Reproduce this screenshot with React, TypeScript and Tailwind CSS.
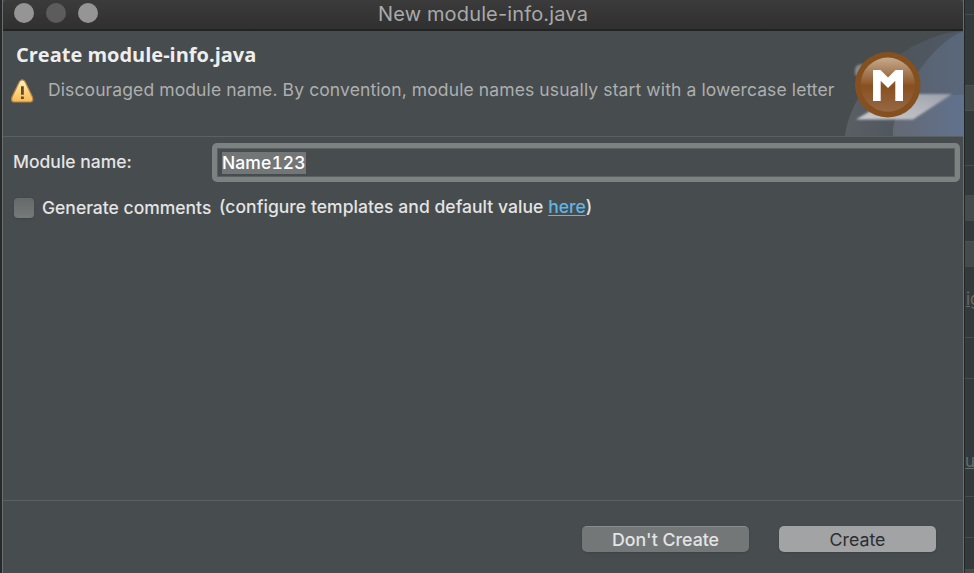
import React from "react";

function WarningIcon() {
  return (
    <svg width="24" height="26" viewBox="0 0 24 26" className="shrink-0">
      <defs>
        <linearGradient id="warn" x1="0" y1="0" x2="0" y2="1">
          <stop offset="0" stopColor="#fff3c4" />
          <stop offset="0.5" stopColor="#fbd581" />
          <stop offset="1" stopColor="#f7b954" />
        </linearGradient>
      </defs>
      <path d="M12.2 1.8C10.6 1.8 9.7 2.9 9.1 4.2L2.1 18.8C1.1 21.6 1.6 24 4 24H20.6C23 24 23.3 21.6 22.3 18.8L15.4 4.2C14.8 2.9 13.8 1.8 12.2 1.8Z" fill="url(#warn)" stroke="#b98046" strokeWidth="1.2" />
      <path d="M11 8.2H13.8V16.8H11ZM11 18.6H13.8V21H11Z" fill="#684821" />
    </svg>
  );
}

function ModuleBanner() {
  return (
    <svg width="130" height="105" viewBox="834 31 130 105" className="shrink-0">
      <defs>
        <linearGradient id="sweep" x1="0" y1="0" x2="1" y2="0">
          <stop offset="0" stopColor="#5a5f65" />
          <stop offset="0.5" stopColor="#4e555c" />
          <stop offset="1" stopColor="#4f5a68" />
        </linearGradient>
        <linearGradient id="sweepMid" x1="0" y1="0" x2="1" y2="0">
          <stop offset="0" stopColor="#59606b" />
          <stop offset="1" stopColor="#5a687c" />
        </linearGradient>
        <linearGradient id="sweepFront" x1="0" y1="0" x2="1" y2="0">
          <stop offset="0" stopColor="#646974" />
          <stop offset="1" stopColor="#61728e" />
        </linearGradient>
        <linearGradient id="sheet" x1="0" y1="1" x2="1" y2="0">
          <stop offset="0" stopColor="#c8cacd" />
          <stop offset="0.6" stopColor="#b2b4ba" />
          <stop offset="1" stopColor="#9a9faa" />
        </linearGradient>
        <linearGradient id="disc" x1="0" y1="0" x2="0" y2="1">
          <stop offset="0" stopColor="#c5aa8e" />
          <stop offset="0.45" stopColor="#935f32" />
          <stop offset="0.52" stopColor="#875020" />
          <stop offset="1" stopColor="#966844" />
        </linearGradient>
        <filter id="soft" x="-20%" y="-20%" width="140%" height="140%">
          <feGaussianBlur stdDeviation="1" />
        </filter>
      </defs>
      <path d="M845 136C849 103 872 73 905 51C924 39 945 32 964 31V136Z" fill="url(#sweep)" />
      <path d="M893 136C895 106 925 46 964 31V136Z" fill="url(#sweepMid)" />
      <path d="M893 136C892 125 896 113 905 108C922 99 943 94 964 95V136Z" fill="url(#sweepFront)" />
      <path d="M855 70Q855 64 863 64L868 67L860 77L855 75Z" fill="#858a8d" filter="url(#soft)" />
      <path d="M856 119.5L875 108L916 94H952L913 119.5Z" fill="url(#sheet)" filter="url(#soft)" />
      <circle cx="887.8" cy="84.7" r="32.8" fill="#85501f" />
      <circle cx="887.8" cy="84.7" r="27.1" fill="url(#disc)" />
      <path d="M873 101V70H880.5L888 77.5L895.5 70H903V101H895.3V80.8L888 88L880.7 80.8V101Z" fill="#fff" />
    </svg>
  );
}

function TitleBar() {
  return (
    <div className="relative h-[31px] shrink-0 rounded-t-[4px] border-b-2 border-[#202322] bg-gradient-to-b from-[#3b3b3b] to-[#303030]">
      <div className="flex gap-3 pl-[11px] pt-[3px]">
        <span className="size-5 rounded-full bg-[#959595]" />
        <span className="size-5 rounded-full bg-[#5c5c5c]" />
        <span className="size-5 rounded-full bg-[#959595]" />
      </div>
      <div className="absolute inset-x-0 top-0 text-center text-[20px] leading-[28px] tracking-[0.15px] text-[#a9a9a9]">New module-info.java</div>
    </div>
  );
}

function RightEdge() {
  return (
    <div className="flex w-[10px] shrink-0 flex-col overflow-hidden border-l border-[#222728] bg-[#343a3b] text-[17px] leading-5 text-[#646b6b]">
      <div className="h-[15px] border-b border-[#464b4c]" />
      <div className="h-[70px]" />
      <div className="h-[26px] border-y border-[#4b4f50] bg-[#434849]" />
      <div className="h-[55px] border-b border-[#474c4d]" />
      <div className="h-[29px]" />
      <div className="h-[26px] bg-[#454a4b]" />
      <div className="h-[20px]" />
      <div className="h-[26px] border-t border-[#4b5051] bg-[#454a4b]" />
      <div className="h-[71px] border-b border-[#474c4d] pt-[22px]"><span className="pl-px underline">ig</span></div>
      <div className="h-[41px] border-b border-[#474c4d]" />
      <div className="h-[118px] border-b border-[#474c4d] pt-[72px]"><span className="underline">u</span></div>
      <div className="h-[41px] border-b border-[#474c4d]" />
      <div className="h-[32px] border-b border-[#474c4d]" />
      <div className="grow bg-[#454a4b]" />
    </div>
  );
}

export default function App() {
  return (
    <div className="flex h-[573px] w-[974px] overflow-hidden bg-[#27292b] font-['Inter',sans-serif] text-[#e3e4e4]">
      <div className="w-[2px] shrink-0" />
      <main className="flex w-[962px] shrink-0 flex-col border-x border-[#697070] bg-[#474c4e]">
        <TitleBar />
        <header className="flex h-[106px] shrink-0 border-b border-[#5b6162]">
          <div className="min-w-0 grow">
            <h1 className="pl-[13px] pt-[10px] font-['Open_Sans',sans-serif] text-[20px] font-bold leading-[28px] whitespace-nowrap text-[#eeeeee]">Create module-info.java</h1>
            <div className="flex pl-[7px] pt-[9px]">
              <WarningIcon />
              <p className="pl-[14px] text-[17.5px] leading-[24px] tracking-[0.11px] whitespace-nowrap text-[#adafaf]">Discouraged module name. By convention, module names usually start with a lowercase letter</p>
            </div>
          </div>
          <div className="-ml-[20px] -mr-px"><ModuleBanner /></div>
        </header>
        <section className="flex h-[364px] shrink-0 flex-col border-b border-[#5b6162] text-[17.5px] font-[450]">
          <div className="flex pl-[10px] pt-[6px]">
            <label className="w-[199px] pt-[7px] leading-6">Module name:</label>
            <div className="flex h-[39px] w-[748px] items-center rounded-[5px] border-[5px] border-[#7c8181] px-[5px] pt-px shadow-[inset_0_0_0_1px_#5b6061]">
              <span className="bg-[#727677] leading-[22px] tracking-[0.1px] text-white tabular-nums">Name123</span>
            </div>
          </div>
          <div className="flex items-center pl-[11px] pt-[12px]">
            <span className="mt-px size-5 rounded-[4px] bg-gradient-to-b from-[#64696a] to-[#767a7b] shadow-sm" />
            <span className="ml-[8px] w-[177px] pt-[2px] leading-6 whitespace-nowrap">Generate comments</span>
            <span className="leading-6 tracking-[0.05px] whitespace-nowrap">(configure templates and default value <span className="text-[#60b5e3] underline underline-offset-2">here</span>)</span>
          </div>
        </section>
        <footer className="flex grow justify-end gap-[30px] pr-[27px] pt-[25px] text-[17.8px]">
          <button className="h-[26px] w-[167px] rounded-[5px] border-t border-[#8a8d8e] bg-[#737778] font-[450] leading-[25px] shadow-sm">Don't Create</button>
          <button className="h-[26px] w-[157px] rounded-[5px] bg-[#a1a3a5] leading-[27px] text-[#2c2e30] shadow-sm">Create</button>
        </footer>
      </main>
      <RightEdge />
    </div>
  );
}
